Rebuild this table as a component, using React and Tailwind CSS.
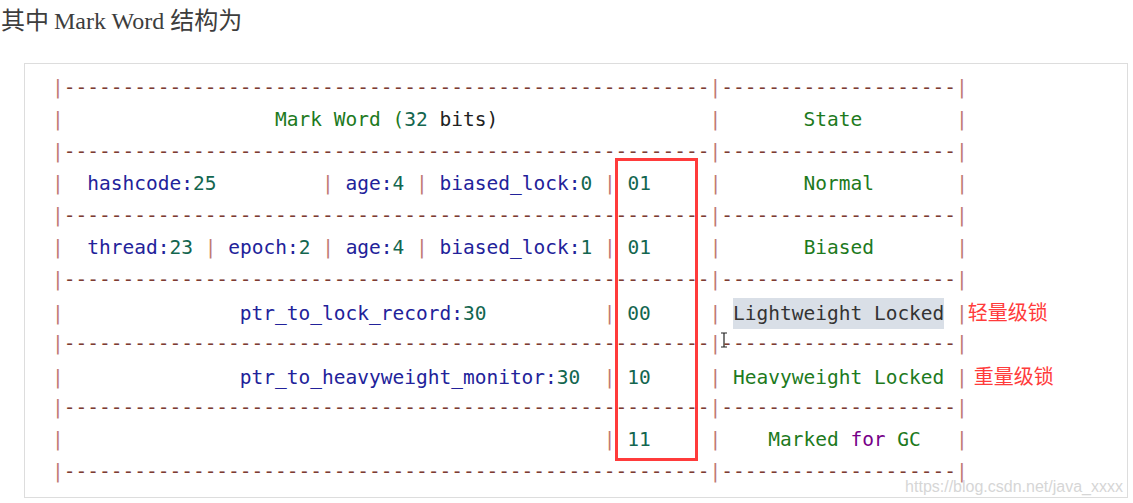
import React from 'react'

// colours of the highlighted code block
const pipeCls = "text-[#c07a74]";
const dashCls = "text-[#7e3b32]";
const greenCls = "text-[#1d7a1d]";
const navyCls = "text-[#22229a]";
const numCls = "text-[#13664f]";
const kwCls = "text-[#770088]";

function P() {
  return <span className={pipeCls}>|</span>;
}

function S({ n }) {
  return <span>{" ".repeat(n)}</span>;
}

function Rule() {
  return (
    <Line>
      <P />
      <span className={dashCls}>{"-".repeat(55)}</span>
      <P />
      <span className={dashCls}>{"-".repeat(20)}</span>
      <P />
    </Line>
  );
}

function Line({ children }) {
  return <div className="h-[32px] leading-[32px] whitespace-pre">{children}</div>;
}

function Field({ name, num }) {
  return (
    <>
      <span className={navyCls}>{name}:</span>
      <span className={numCls}>{num}</span>
    </>
  );
}

function Note({ children, className = "" }) {
  return (
    <span className={"text-[20px] text-[#ff3b3b] font-['Noto_Sans_CJK_SC',sans-serif] " + className}>
      {children}
    </span>
  );
}

export default function App() {
  return (
    <div className="w-[1133px] h-[503px] bg-white overflow-hidden">
      <div className="h-[42px] leading-[42px] pl-[1px] text-[24px] text-[#3d3d3d] font-['Liberation_Serif','Noto_Sans_CJK_SC',serif]">
        其中<span className="ml-[5px]">Mark Word</span> 结构为
      </div>

      <div className="relative mt-[21px] ml-[24px] w-[1104px] border border-[#dddddd] bg-white">
        <div className="pl-[27px] pt-[8px] pb-[9px] text-[19.5px] font-['DejaVu_Sans_Mono',monospace]">
          <Rule />
          <Line>
            <P /><S n={18} />
            <span className={greenCls}>Mark Word (</span>
            <span className={numCls}>32</span>
            <span className="text-[#222]"> bits)</span>
            <S n={18} /><P /><S n={7} />
            <span className={greenCls}>State</span>
            <S n={8} /><P />
          </Line>
          <Rule />
          <Line>
            <P /><S n={2} />
            <Field name="hashcode" num="25" />
            <S n={9} /><P /><S n={1} />
            <Field name="age" num="4" />
            <S n={1} /><P /><S n={1} />
            <Field name="biased_lock" num="0" />
            <S n={1} /><P /><S n={1} />
            <span className={numCls}>01</span>
            <S n={5} /><P /><S n={7} />
            <span className={greenCls}>Normal</span>
            <S n={7} /><P />
          </Line>
          <Rule />
          <Line>
            <P /><S n={2} />
            <Field name="thread" num="23" />
            <S n={1} /><P /><S n={1} />
            <Field name="epoch" num="2" />
            <S n={1} /><P /><S n={1} />
            <Field name="age" num="4" />
            <S n={1} /><P /><S n={1} />
            <Field name="biased_lock" num="1" />
            <S n={1} /><P /><S n={1} />
            <span className={numCls}>01</span>
            <S n={5} /><P /><S n={7} />
            <span className={greenCls}>Biased</span>
            <S n={7} /><P />
          </Line>
          <Rule />
          <Line>
            <P /><S n={15} />
            <Field name="ptr_to_lock_record" num="30" />
            <S n={10} /><P /><S n={1} />
            <span className={numCls}>00</span>
            <S n={5} /><P /><S n={1} />
            <span className="bg-[#d9dfe7] text-[#333333] py-[4px]">Lightweight Locked</span>
            <S n={1} /><P />
            <Note>轻量级锁</Note>
          </Line>
          <Rule />
          <Line>
            <P /><S n={15} />
            <Field name="ptr_to_heavyweight_monitor" num="30" />
            <S n={2} /><P /><S n={1} />
            <span className={numCls}>10</span>
            <S n={5} /><P /><S n={1} />
            <span className={greenCls}>Heavyweight Locked</span>
            <S n={1} /><P />
            <Note className="ml-[6px]">重量级锁</Note>
          </Line>
          <Rule />
          <Line>
            <P /><S n={46} /><P /><S n={1} />
            <span className={numCls}>11</span>
            <S n={5} /><P /><S n={4} />
            <span className={greenCls}>Marked </span>
            <span className={kwCls}>for</span>
            <span className={greenCls}> GC</span>
            <S n={3} /><P />
          </Line>
          <Rule />
        </div>

        {/* red highlight box drawn over the state bits */}
        <div className="absolute left-[590px] top-[94px] w-[83px] h-[303px] border-[3px] border-[#ff3b3b]" />

        {/* text cursor */}
        <svg className="absolute left-[695px] top-[268px]" width="8" height="16" viewBox="0 0 8 16">
          <path d="M1 1h6M4 1v14M1 15h6" stroke="#222" strokeWidth="1.2" fill="none" />
        </svg>

        <div className="absolute right-[4px] bottom-[0px] leading-[20px] text-[16px] text-[#d6d6d6] font-['Liberation_Sans',sans-serif]">
          https://blog.csdn.net/java_xxxx
        </div>
      </div>
    </div>
  );
}
